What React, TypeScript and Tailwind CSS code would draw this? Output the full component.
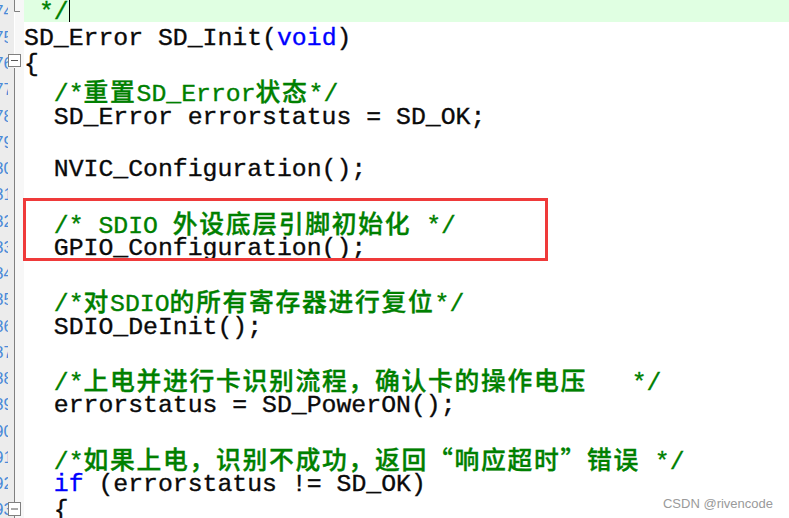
import React from "react";

type Seg = [string, "t" | "c" | "k"];

const code: Seg[][] = [
  [[" */", "c"]],
  [["SD_Error SD_Init(", "t"], ["void", "k"], [")", "t"]],
  [["{", "t"]],
  [["  ", "t"], ["/*重置SD_Error状态*/", "c"]],
  [["  SD_Error errorstatus = SD_OK;", "t"]],
  [],
  [["  NVIC_Configuration();", "t"]],
  [],
  [["  ", "t"], ["/* SDIO 外设底层引脚初始化 */", "c"]],
  [["  GPIO_Configuration();", "t"]],
  [],
  [["  ", "t"], ["/*对SDIO的所有寄存器进行复位*/", "c"]],
  [["  SDIO_DeInit();", "t"]],
  [],
  [["  ", "t"], ["/*上电并进行卡识别流程，确认卡的操作电压   */", "c"]],
  [["  errorstatus = SD_PowerON();", "t"]],
  [],
  [["  ", "t"], ["/*如果上电，识别不成功，返回“响应超时”错误 */", "c"]],
  [["  ", "t"], ["if", "k"], [" (errorstatus != SD_OK)", "t"]],
  [["  {", "t"]],
];

const colors = {
  t: "text-[#0a0a0a]",
  c: "text-[#008000]",
  k: "text-[#0000ff]",
};

const cjk = /([\u3000-\u303f\u4e00-\u9fff\uff00-\uffef\u201c\u201d]+)/;

function renderText(text: string) {
  return text.split(cjk).map((part, i) =>
    cjk.test(part) ? (
      <span
        key={i}
        className="tracking-[1.7px] font-['Noto_Sans_CJK_SC',sans-serif] font-medium"
      >
        {part}
      </span>
    ) : (
      <span key={i}>{part}</span>
    )
  );
}

// fold gutter drawing for a row
const Fold: React.FC<{ kind: "end" | "open" | "line" | "none" | "openLast" }> = ({ kind }) => (
  <svg width="16" height="26.25" className="shrink-0 block">
    <rect x="0" y="0" width="6" height="27" fill="#ececec" />
    <rect x="7" y="0" width="9" height="27" fill="#f7f7f7" />
    {kind === "end" && (
      <path d="M6.5 0 V12.5 H12" stroke="#808080" strokeWidth="1" fill="none" />
    )}
    {kind === "line" && <line x1="6.5" y1="0" x2="6.5" y2="27" stroke="#808080" />}
    {kind === "open" && (
      <>
        <line x1="6.5" y1="17" x2="6.5" y2="27" stroke="#808080" />
        <rect x="0.5" y="3.5" width="12" height="12" fill="#ffffff" stroke="#808080" />
        <line x1="3" y1="9.5" x2="10" y2="9.5" stroke="#555555" />
      </>
    )}
    {kind === "openLast" && (
      <>
        <line x1="6.5" y1="0" x2="6.5" y2="27" stroke="#808080" />
        <rect x="0.5" y="5.5" width="12" height="13" fill="#ffffff" stroke="#808080" />
        <line x1="3" y1="12" x2="10" y2="12" stroke="#555555" />
      </>
    )}
  </svg>
);

export default function App() {
  return (
    <div className="relative w-[789px] h-[518px] overflow-hidden bg-white">
      <div className="-mt-[1.5px] flex flex-col font-['Liberation_Mono','Noto_Sans_CJK_SC',monospace] text-[24.8px] leading-[26.25px] [-webkit-text-stroke:0.35px]">
        {code.map((segs, i) => {
          const fold =
            i === 0 ? "end" : i === 1 ? "none" : i === 2 ? "open" : i === 19 ? "openLast" : "line";
          return (
            <div key={i} className="flex h-[26.25px] shrink-0">
              <div className="w-[8px] shrink-0 bg-[#ececec] overflow-hidden flex justify-end [-webkit-text-stroke:0px]">
                <span className="text-[17px] leading-[26.25px] text-[#4a8ad8] font-['Liberation_Sans',sans-serif] -mr-[5px]">
                  {474 + i}
                </span>
              </div>
              <Fold kind={fold} />
              <div
                className={`flex-1 whitespace-pre ${
                  i === 0 ? "bg-[linear-gradient(#e0ffe2_0,#e0ffe2_23px,#ffffff_23px)]" : ""
                }`}
              >
                {segs.map(([text, kind], j) => (
                  <span key={j} className={colors[kind]}>
                    {renderText(text)}
                  </span>
                ))}
                {i === 0 && (
                  <span className="inline-block w-px h-[22px] bg-black align-top mt-[1px]" />
                )}
              </div>
            </div>
          );
        })}
      </div>

      {/* annotation box */}
      <div className="absolute left-[23px] top-[198px] w-[525px] h-[63px] border-[3px] border-[#ef3a3a]" />

      <div className="absolute right-[16px] top-[494px] text-[13px] text-[#9a9a9a] font-['Liberation_Sans',sans-serif]">
        CSDN @rivencode
      </div>
    </div>
  );
}
